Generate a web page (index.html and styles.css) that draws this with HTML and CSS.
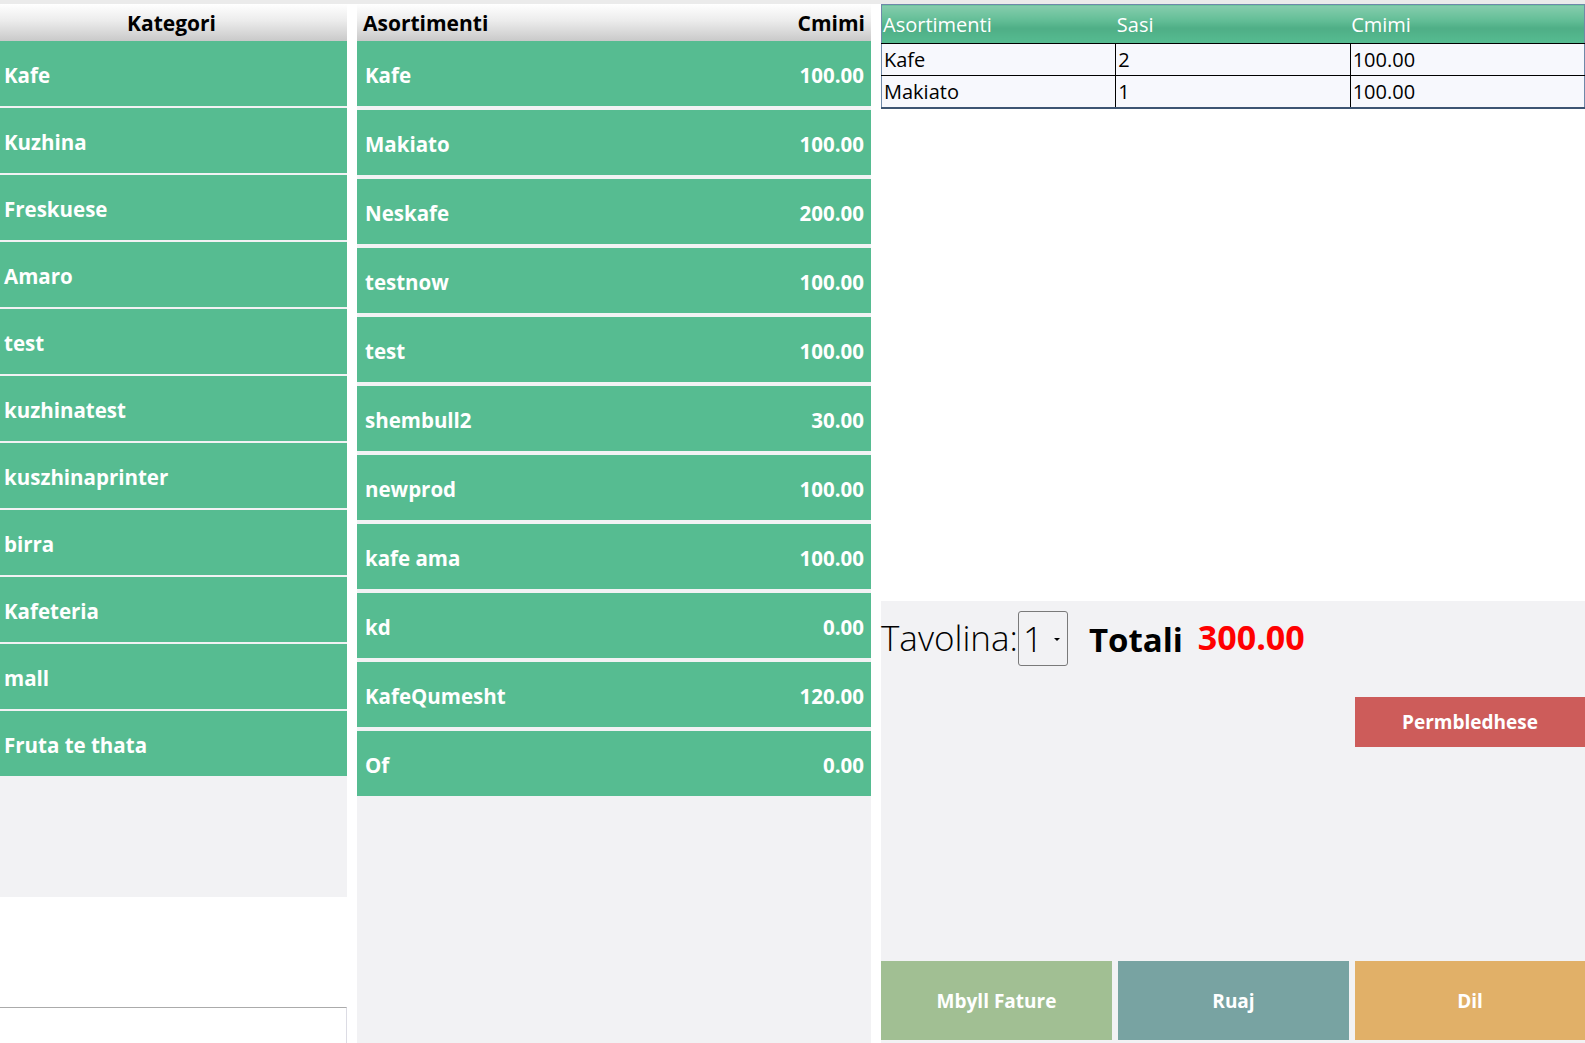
FILE: index.html
```html
<!DOCTYPE html>
<html>
<head>
<meta charset="utf-8">
<link rel="stylesheet" href="styles.css">
</head>
<body>
<div class="app">
  <section class="col cats">
    <div class="head head-center">Kategori</div>
    <div class="list cat-list">
      <div class="cat">Kafe</div>
      <div class="cat">Kuzhina</div>
      <div class="cat">Freskuese</div>
      <div class="cat">Amaro</div>
      <div class="cat">test</div>
      <div class="cat">kuzhinatest</div>
      <div class="cat">kuszhinaprinter</div>
      <div class="cat">birra</div>
      <div class="cat">Kafeteria</div>
      <div class="cat">mall</div>
      <div class="cat">Fruta te thata</div>
    </div>
    <div class="cat-blank"></div>
    <div class="cat-input"></div>
  </section>

  <section class="col prods">
    <div class="head head-split"><span>Asortimenti</span><span>Cmimi</span></div>
    <div class="list prod-list">
      <div class="prod"><span>Kafe</span><span>100.00</span></div>
      <div class="prod"><span>Makiato</span><span>100.00</span></div>
      <div class="prod"><span>Neskafe</span><span>200.00</span></div>
      <div class="prod"><span>testnow</span><span>100.00</span></div>
      <div class="prod"><span>test</span><span>100.00</span></div>
      <div class="prod"><span>shembull2</span><span>30.00</span></div>
      <div class="prod"><span>newprod</span><span>100.00</span></div>
      <div class="prod"><span>kafe ama</span><span>100.00</span></div>
      <div class="prod"><span>kd</span><span>0.00</span></div>
      <div class="prod"><span>KafeQumesht</span><span>120.00</span></div>
      <div class="prod"><span>Of</span><span>0.00</span></div>
    </div>
  </section>

  <section class="col order">
    <table class="grid">
      <thead>
        <tr><th>Asortimenti</th><th>Sasi</th><th>Cmimi</th></tr>
      </thead>
      <tbody>
        <tr><td>Kafe</td><td>2</td><td>100.00</td></tr>
        <tr><td>Makiato</td><td>1</td><td>100.00</td></tr>
      </tbody>
    </table>
    <div class="order-blank"></div>
    <div class="panel">
      <div class="total-row">
        <span class="tav-label">Tavolina:</span>
        <div class="select"><span>1</span><span class="caret"></span></div>
        <span class="tot-label">Totali</span>
        <span class="tot-value">300.00</span>
      </div>
      <button class="btn btn-red">Permbledhese</button>
      <div class="actions">
        <button class="btn btn-green">Mbyll Fature</button>
        <button class="btn btn-teal">Ruaj</button>
        <button class="btn btn-orange">Dil</button>
      </div>
    </div>
  </section>
</div>
</body>
</html>
```

FILE: styles.css
```css
* { box-sizing: border-box; }

html, body {
  margin: 0;
  padding: 0;
  background: #ffffff;
}

body {
  font-family: "Open Sans", "Noto Sans", "Liberation Sans", sans-serif;
  width: 1585px;
  height: 1043px;
  overflow: hidden;
}

.app {
  display: grid;
  grid-template-columns: 347px 514px 704px;
  column-gap: 10px;
  height: 1043px;
  border-top: 4px solid #ebebeb;
}

.col {
  display: flex;
  flex-direction: column;
  min-height: 0;
}

.head {
  height: 37px;
  flex: none;
  background: linear-gradient(#ffffff 0%, #ececec 45%, #c9c9c9 100%);
  font-weight: 700;
  font-size: 21px;
  color: #000;
  display: flex;
  align-items: center;
  line-height: 1;
  padding-top: 1px;
}

.head-center { justify-content: center; padding-right: 4px; }

.head-split {
  justify-content: space-between;
  padding: 1px 6px 0 6px;
}

.list {
  background: #f2f2f4;
  display: flex;
  flex-direction: column;
}

.cat-list {
  height: 856px;
  flex: none;
  gap: 2px;
}

.cat {
  height: 65px;
  flex: none;
  background: #56bc91;
  color: #fff;
  font-weight: 700;
  font-size: 20.5px;
  display: flex;
  align-items: center;
  padding: 3px 0 0 4px;
}

.cat-blank {
  height: 110px;
  flex: none;
  background: #fff;
}

.cat-input {
  flex: 1;
  border-top: 1px solid #ababab;
  border-right: 1px solid #dcdce4;
  background: #fff;
}

.prod-list {
  flex: 1;
  gap: 4px;
}

.prod {
  height: 65px;
  flex: none;
  background: #56bc91;
  color: #fff;
  font-weight: 700;
  font-size: 20.5px;
  display: flex;
  align-items: center;
  justify-content: space-between;
  padding: 3px 7px 0 8px;
}

.grid {
  width: 704px;
  border-collapse: collapse;
  table-layout: fixed;
  flex: none;
  border: 1px solid #6f89a9;
  border-bottom: 2px solid #3d5573;
  font-size: 20px;
}

.grid th {
  height: 39px;
  text-align: left;
  font-weight: 400;
  color: #fff;
  padding: 0 0 0 1px;
  background: linear-gradient(#86cdad 0%, #62bd96 40%, #4fae86 60%, #56bc91 100%);
}

.grid td {
  height: 32px;
  padding: 0 0 0 2px;
  background: #f7f8fd;
  color: #000;
  border-top: 1px solid #000;
  border-left: 1px solid #000;
}

.grid td:first-child { border-left: none; }

.order-blank {
  height: 492px;
  flex: none;
}

.panel {
  flex: 1;
  background: #f2f2f4;
  display: flex;
  flex-direction: column;
}

.total-row {
  display: flex;
  align-items: center;
  margin-top: 10px;
  height: 55px;
}

.tav-label {
  font-size: 35px;
  font-weight: 300;
  color: #000;
  margin-top: -2px;
}

.select {
  width: 50px;
  height: 55px;
  border: 1px solid #7a7a7a;
  border-radius: 3px;
  display: flex;
  align-items: center;
  justify-content: space-between;
  padding: 0 7px 0 4px;
  font-size: 35px;
  font-weight: 300;
  margin-left: 0;
}

.caret {
  width: 0;
  height: 0;
  border-left: 3px solid transparent;
  border-right: 3px solid transparent;
  border-top: 3px solid #000;
  margin-top: 2px;
}

.tot-label {
  font-size: 33px;
  font-weight: 700;
  margin-left: 21px;
  margin-top: 2px;
}

.tot-value {
  font-size: 34px;
  font-weight: 700;
  color: #ff0000;
  margin-left: 15px;
  margin-top: -3px;
}

.btn {
  border: none;
  color: #fff;
  font-family: inherit;
  font-weight: 700;
  font-size: 19px;
  padding: 0;
  margin: 0;
}

.btn-red {
  align-self: flex-end;
  width: 230px;
  height: 50px;
  margin-top: 31px;
  background: #cd5c5a;
}

.actions {
  margin-top: auto;
  margin-bottom: 3px;
  display: grid;
  grid-template-columns: 231px 231px 230px;
  column-gap: 6px;
  height: 79px;
}

.btn-green { background: #a1bf93; }
.btn-teal { background: #78a3a2; }
.btn-orange { background: #e1b068; }
```
